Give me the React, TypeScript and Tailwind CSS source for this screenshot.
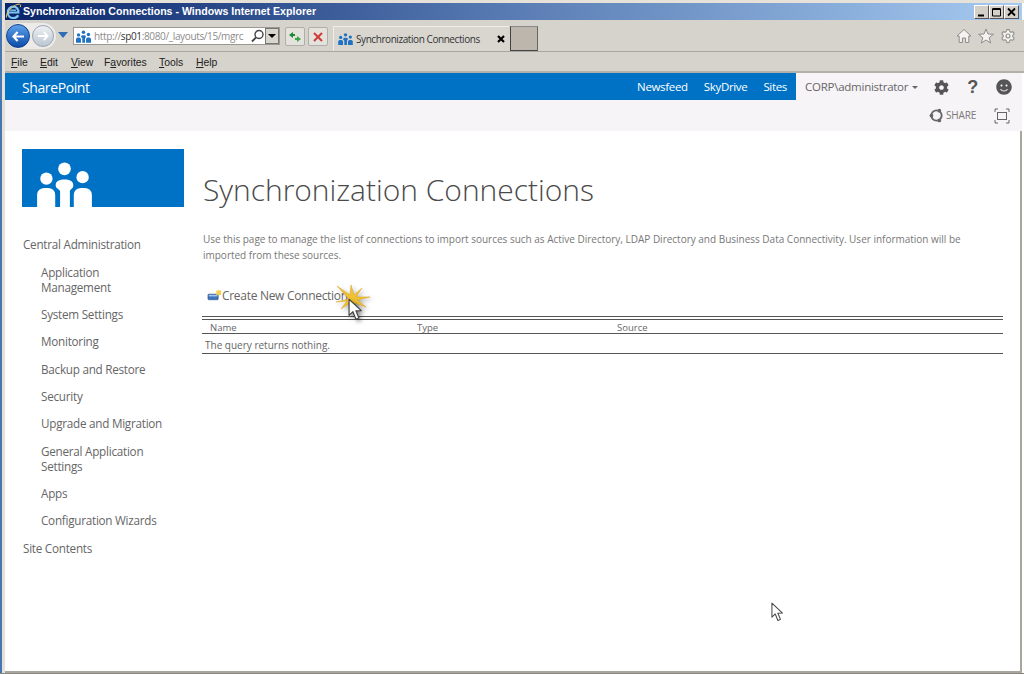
import React from "react";
import { FaCog, FaSmile } from "react-icons/fa";
import { Settings } from "lucide-react";

const People = ({ className = "" }: { className?: string }) => (
  <svg viewBox="0 0 56 46" className={className} fill="currentColor">
    <circle cx="28" cy="7" r="6.5" />
    <circle cx="9.5" cy="17" r="6.3" />
    <circle cx="46.5" cy="15.5" r="6.3" />
    <path d="M19 24 C19 19.5 23 18 28 18 C33 18 37 19.5 37 24 C37 27 33.5 28 33.5 30 L33.5 46 L23.5 46 L23.5 30 C23.5 28 19 27 19 24 Z" />
    <path d="M0 46 L0 34 C0 28 4 26.5 9.5 26.5 C14.5 26.5 18.5 28 18.5 34 L18.5 46 Z" />
    <path d="M37.5 46 L37.5 34 C37.5 28 41.5 26.5 47 26.5 C52 26.5 56 28 56 34 L56 46 Z" />
  </svg>
);

const Pointer = ({ className = "" }: { className?: string }) => (
  <svg viewBox="0 0 14 22" className={className}>
    <path d="M1 1 L1 16 L4.6 12.6 L7.4 19.6 L10.2 18.4 L7.4 11.8 L12.4 11.6 Z" fill="#fff" stroke="#444" strokeWidth="1.1" strokeLinejoin="round" />
  </svg>
);

const Burst = ({ className = "" }: { className?: string }) => (
  <svg viewBox="0 0 36 30" className={className}>
    <path
      d="M14 14 L2 1 L15 10 L16 0 L19 10 L27 3 L21 12 L35 12 L22 15 L31 22 L20 18 L18 28 L15 18 L6 24 L12 16 L1 17 Z"
      fill="#f2c230"
      stroke="#d9a21b"
      strokeWidth="0.5"
    />
  </svg>
);

const IELogo = ({ className = "" }: { className?: string }) => (
  <svg viewBox="0 0 17 17" className={className}>
    <path d="M3.2 9.5 H13.4 C13.6 5.8 11.4 3.6 8.4 3.6 C5.2 3.6 2.8 6.2 2.8 9.4 C2.8 12.6 5.2 15 8.4 15 C10.6 15 12.4 14 13.2 12.2" fill="none" stroke="#7cc6f2" strokeWidth="2.2" />
    <path d="M5.2 7.2 H11" stroke="#7cc6f2" strokeWidth="1.4" />
    <path d="M1.5 14.5 C0 11 7 2.5 13 1.2 C15.5 .7 16.2 2.2 15.2 4.2" fill="none" stroke="#f1c75a" strokeWidth="1" />
  </svg>
);

const Letter = ({ u, rest, before = "", w }: { u: string; rest: string; before?: string; w: string }) => (
  <span className={w}>
    {before}
    <span className="underline underline-offset-1">{u}</span>
    {rest}
  </span>
);

const WinBtn = ({ children }: { children: React.ReactNode }) => (
  <div className="flex h-[14px] w-[15px] items-center justify-center border border-b-[#555] border-l-white border-r-[#555] border-t-white bg-[#d4d0c8]">
    <svg viewBox="0 0 11 10" className="h-[10px] w-[11px]" fill="none" stroke="#000">
      {children}
    </svg>
  </div>
);

const nav: { label: string; mb: string }[] = [
  { label: "Application\nManagement", mb: "mb-3" },
  { label: "System Settings", mb: "mb-3" },
  { label: "Monitoring", mb: "mb-[13px]" },
  { label: "Backup and Restore", mb: "mb-3" },
  { label: "Security", mb: "mb-3" },
  { label: "Upgrade and Migration", mb: "mb-[13px]" },
  { label: "General Application\nSettings", mb: "mb-3" },
  { label: "Apps", mb: "mb-3" },
  { label: "Configuration Wizards", mb: "mb-[13px]" },
];

export default function App() {
  return (
    <div className="relative flex h-[674px] w-[1024px] overflow-hidden border-b border-[#8a8780] bg-white font-['Open_Sans',sans-serif]">
      <div className="w-[2px] shrink-0 bg-[#4477b4]" />
      <div className="w-[3px] shrink-0 bg-[#e6e0d6]" />
      <div className="flex min-w-0 flex-1 flex-col">
        <div className="h-[3px] shrink-0 bg-[#e6e2da]" />
        {/* Title bar */}
        <div className="mr-[2px] flex h-[17px] shrink-0 items-center bg-gradient-to-r from-[#0a246a] via-[#5a7cb4] to-[#a6caf0] pr-[3px]">
          <IELogo className="h-[17px] w-[17px]" />
          <span className="ml-[1px] font-['Liberation_Sans',sans-serif] text-[10.6px] font-bold text-white">
            Synchronization Connections - Windows Internet Explorer
          </span>
          <div className="ml-auto flex">
            <WinBtn><path d="M2 8.5 H8" strokeWidth="2" /></WinBtn>
            <WinBtn><path d="M1.5 2 H9.5 V9 H1.5 Z" strokeWidth="1" /><path d="M1.5 2 H9.5" strokeWidth="2" /></WinBtn>
            <WinBtn><path d="M2 1.5 L9 8.5 M9 1.5 L2 8.5" strokeWidth="1.8" /></WinBtn>
          </div>
        </div>
        {/* Toolbar */}
        <div className="flex h-[32px] shrink-0 border-b border-[#a9a69f] bg-[#d6d3cd]">
          <div className="flex items-start pt-[3px]">
            <div className="relative ml-[1px] flex h-[26px] w-[50px] items-center rounded-full bg-[#ecebe7]">
              <div className="flex h-[24px] w-[24px] items-center justify-center rounded-full border border-[#0f3f8f] bg-gradient-to-b from-[#5da2e8] to-[#0b4aa8]">
                <svg viewBox="0 0 14 12" className="h-[11px] w-[13px]"><path d="M6 1 L1.5 6 L6 11 M2 6 L13 6" stroke="#fff" strokeWidth="2.4" fill="none" /></svg>
              </div>
              <div className="ml-[2px] flex h-[22px] w-[22px] items-center justify-center rounded-full border border-[#9aa6b4] bg-gradient-to-b from-[#eef1f5] to-[#bcc6d2]">
                <svg viewBox="0 0 14 12" className="h-[10px] w-[12px]"><path d="M8 1 L12.5 6 L8 11 M12 6 L1 6" stroke="#fff" strokeWidth="2.2" fill="none" /></svg>
              </div>
            </div>
            <svg viewBox="0 0 10 6" className="ml-[2px] mt-[9px] h-[6px] w-[10px]"><path d="M0 0 H10 L5 6 Z" fill="#2f6db5" /></svg>
          </div>
          {/* Address */}
          <div className="ml-[5px] mt-[7px] flex h-[18px] w-[207px] items-center border border-[#9a9890] bg-white">
            <People className="ml-[2px] h-[13px] w-[15px] text-[#1f72c4]" />
            <span className="ml-[3px] w-[156px] whitespace-nowrap text-[10px] tracking-[-0.36px] text-[#8b8b8b]">
              http://<span className="text-[#333]">sp01</span>:8080/_layouts/15/mgrc
            </span>
            <svg viewBox="0 0 14 14" className="h-[14px] w-[15px]"><circle cx="8.5" cy="5.5" r="4" fill="none" stroke="#444" strokeWidth="1.4" /><path d="M5.5 8.5 L1.5 12.5" stroke="#444" strokeWidth="1.8" /></svg>
            <div className="ml-auto flex h-[16px] w-[14px] items-center justify-center border border-[#777] bg-[#d8d5cf]">
              <svg viewBox="0 0 8 4" className="h-[4px] w-[8px]"><path d="M0 0 H8 L4 4 Z" fill="#000" /></svg>
            </div>
          </div>
          <div className="ml-[5px] mt-[7px] flex h-[19px] w-[20px] items-center justify-center rounded-[2px] border border-[#b0aea8] bg-[#e4e2dd]">
            <svg viewBox="0 0 14 12" className="h-[12px] w-[14px]"><path d="M1 4 L5 1 V3 H7 V5 H5 V7 Z" fill="#1c8a34" /><path d="M13 8 L9 11 V9 H7 V7 H9 V5 Z" fill="#3aa648" /></svg>
          </div>
          <div className="ml-[3px] mt-[7px] flex h-[19px] w-[20px] items-center justify-center rounded-[2px] border border-[#b0aea8] bg-[#e4e2dd]">
            <svg viewBox="0 0 10 10" className="h-[10px] w-[10px]"><path d="M1 1 L9 9 M9 1 L1 9" stroke="#cf3a3a" strokeWidth="2" /></svg>
          </div>
          {/* Tab */}
          <div className="ml-[5px] mt-[6px] flex h-[25px] w-[176px] items-center border-l border-t border-[#efede9] bg-[#d9d6d0] pl-[4px]">
            <People className="h-[12px] w-[15px] text-[#1f72c4]" />
            <span className="ml-[3px] whitespace-nowrap text-[10px] tracking-[-0.43px] text-[#333]">Synchronization Connections</span>
            <svg viewBox="0 0 8 8" className="ml-auto mr-[4px] h-[8px] w-[8px]"><path d="M1 1 L7 7 M7 1 L1 7" stroke="#000" strokeWidth="2.2" /></svg>
          </div>
          <div className="ml-[1px] mt-[6px] h-[25px] w-[28px] border border-b-[#444] border-l-[#444] border-r-[#666] border-t-[#8a8a8a] bg-[#bdb6ac]" />
          <div className="ml-auto mr-[8px] mt-[8px] flex items-start gap-[6px]">
            <svg viewBox="0 0 16 16" className="h-[16px] w-[16px]"><path d="M8 1.5 L15 8 H12.8 V14.5 H9.6 V10 H6.4 V14.5 H3.2 V8 H1 Z" fill="#f4f3f0" stroke="#8c8c8c" strokeWidth="1" strokeLinejoin="round" /></svg>
            <svg viewBox="0 0 16 16" className="h-[16px] w-[16px]"><path d="M8 1 L10 6 L15.4 6.3 L11.2 9.7 L12.7 15 L8 12 L3.3 15 L4.8 9.7 L.6 6.3 L6 6 Z" fill="#f4f3f0" stroke="#8c8c8c" strokeWidth="1" strokeLinejoin="round" /></svg>
            <Settings className="h-[16px] w-[16px] fill-[#f4f3f0] text-[#8c8c8c]" strokeWidth={1.6} />
          </div>
        </div>
        {/* Menu */}
        <div className="flex h-[21px] shrink-0 items-center border-b-2 border-[#b3b0aa] bg-[#d6d3cd] pl-[6px] pt-[2px] font-['Liberation_Sans',sans-serif] text-[10.4px] text-[#222]">
          <Letter w="w-[29px]" u="F" rest="ile" />
          <Letter w="w-[31px]" u="E" rest="dit" />
          <Letter w="w-[33px]" u="V" rest="iew" />
          <Letter w="w-[55px]" before="F" u="a" rest="vorites" />
          <Letter w="w-[37px]" u="T" rest="ools" />
          <Letter w="w-[30px]" u="H" rest="elp" />
        </div>
        {/* SharePoint suite bar */}
        <div className="mr-[2px] flex h-[27px] shrink-0 bg-[#f7f4f8]">
          <div className="flex w-[791px] items-center bg-[#0072c6] text-white">
            <span className="ml-[17px] pt-[2px] text-[14px] leading-none tracking-[-0.4px]">SharePoint</span>
            <div className="ml-auto mr-[9px] flex gap-[16px] text-[11.5px] leading-none tracking-[-0.33px]">
              <span>Newsfeed</span>
              <span>SkyDrive</span>
              <span>Sites</span>
            </div>
          </div>
          <div className="flex flex-1 items-center pl-[9px] pt-[1px] text-[#666]">
            <span className="whitespace-nowrap text-[11.5px] tracking-[-0.25px]">CORP\administrator</span>
            <svg viewBox="0 0 6 3" className="ml-[4px] h-[3px] w-[6px]"><path d="M0 0 H6 L3 3 Z" fill="#666" /></svg>
            <FaCog className="ml-[16px] h-[15px] w-[15px] text-[#555]" />
            <span className="ml-[18px] font-['Liberation_Sans',sans-serif] text-[18px] font-bold leading-none text-[#555]">?</span>
            <FaSmile className="ml-[18px] h-[16px] w-[16px] text-[#555]" />
          </div>
        </div>
        {/* Action row */}
        <div className="mr-[2px] flex h-[31px] shrink-0 items-center justify-end bg-[#f7f4f8] pr-[12px] text-[#777]">
          <svg viewBox="0 0 16 16" className="h-[15px] w-[15px]">
            <circle cx="8" cy="8" r="5.5" fill="none" stroke="#666" strokeWidth="2" />
            <circle cx="2.6" cy="8" r="2" fill="#666" />
            <circle cx="11" cy="2.8" r="2" fill="#666" />
            <circle cx="11" cy="13.2" r="2" fill="#666" />
          </svg>
          <span className="ml-[2px] text-[10px] tracking-[-0.2px]">SHARE</span>
          <svg viewBox="0 0 16 16" className="ml-[18px] h-[16px] w-[16px]" fill="none" stroke="#666" strokeWidth="1">
            <rect x="3.5" y="4.5" width="9" height="7" />
            <path d="M1 4 V1 H4 M12 1 H15 V4 M15 12 V15 H12 M4 15 H1 V12" />
          </svg>
        </div>
        {/* Body */}
        <div className="mr-[2px] flex min-h-0 flex-1 border-b-2 border-r-2 border-[#a9a69f]">
          <div className="w-[197px] shrink-0 pl-[17px] pt-[18px]">
            <div className="flex h-[58px] w-[162px] items-end bg-[#0072c6] pl-[15px]">
              <People className="h-[45px] w-[55px] text-white" />
            </div>
            <nav className="mt-[30px] text-[11.7px] leading-[15px] tracking-[-0.25px] text-[#666]">
              <div className="mb-[13px] ml-[1px]">Central Administration</div>
              {nav.map((n) => (
                <div key={n.label} className={`ml-[19px] whitespace-pre-line ${n.mb}`}>
                  {n.label}
                </div>
              ))}
              <div className="ml-[1px]">Site Contents</div>
            </nav>
          </div>
          <main className="min-w-0 flex-1 pt-[37px]">
            <h1 className="ml-[1px] text-[30px] font-light leading-[44px] tracking-[-0.03px] text-[#4a4a4a]">Synchronization Connections</h1>
            <p className="ml-[1px] mt-[19px] text-[10px] leading-[16px] tracking-[-0.01px] text-[#777]">
              Use this page to manage the list of connections to import sources such as Active Directory, LDAP Directory and Business Data Connectivity. User information will be
              <br />
              imported from these sources.
            </p>
            <div className="mt-[24px] flex h-[18px] items-center pl-[5px] text-[12px] tracking-[-0.3px] text-[#666]">
              <svg viewBox="0 0 16 12" className="h-[12px] w-[15px]">
                <rect x="1" y="4" width="11" height="6" rx="1" fill="#3f74b8" stroke="#24508c" strokeWidth="0.6" />
                <rect x="2" y="5" width="9" height="1.4" fill="#a9c9ee" />
                <path d="M10 0 H15 V5 H10 Z" fill="#f5cf4a" />
              </svg>
              <span className="whitespace-nowrap">Create New Connection</span>
            </div>
            <div className="mr-[17px] mt-[11px] text-[#666]">
              <div className="h-[4px] border-y border-[#555]" />
              <div className="flex h-[14px] items-center border-b border-[#555] pt-[3px] text-[9.5px] leading-none">
                <span className="ml-[8px] w-[207px]">Name</span>
                <span className="w-[200px]">Type</span>
                <span>Source</span>
              </div>
              <div className="flex h-[20px] items-center border-b border-[#555] pl-[3px] pt-[3px] text-[10px] leading-none">
                The query returns nothing.
              </div>
            </div>
          </main>
        </div>
      </div>
      {/* Cursors over content */}
      <Burst className="absolute left-[335px] top-[285px] h-[30px] w-[36px] drop-shadow-[2px_2px_2px_rgba(0,0,0,0.35)]" />
      <Pointer className="absolute left-[348px] top-[298px] h-[24px] w-[15px] drop-shadow-[2px_2px_2px_rgba(0,0,0,0.45)]" />
      <Pointer className="absolute left-[771px] top-[602px] h-[21px] w-[13px]" />
    </div>
  );
}
